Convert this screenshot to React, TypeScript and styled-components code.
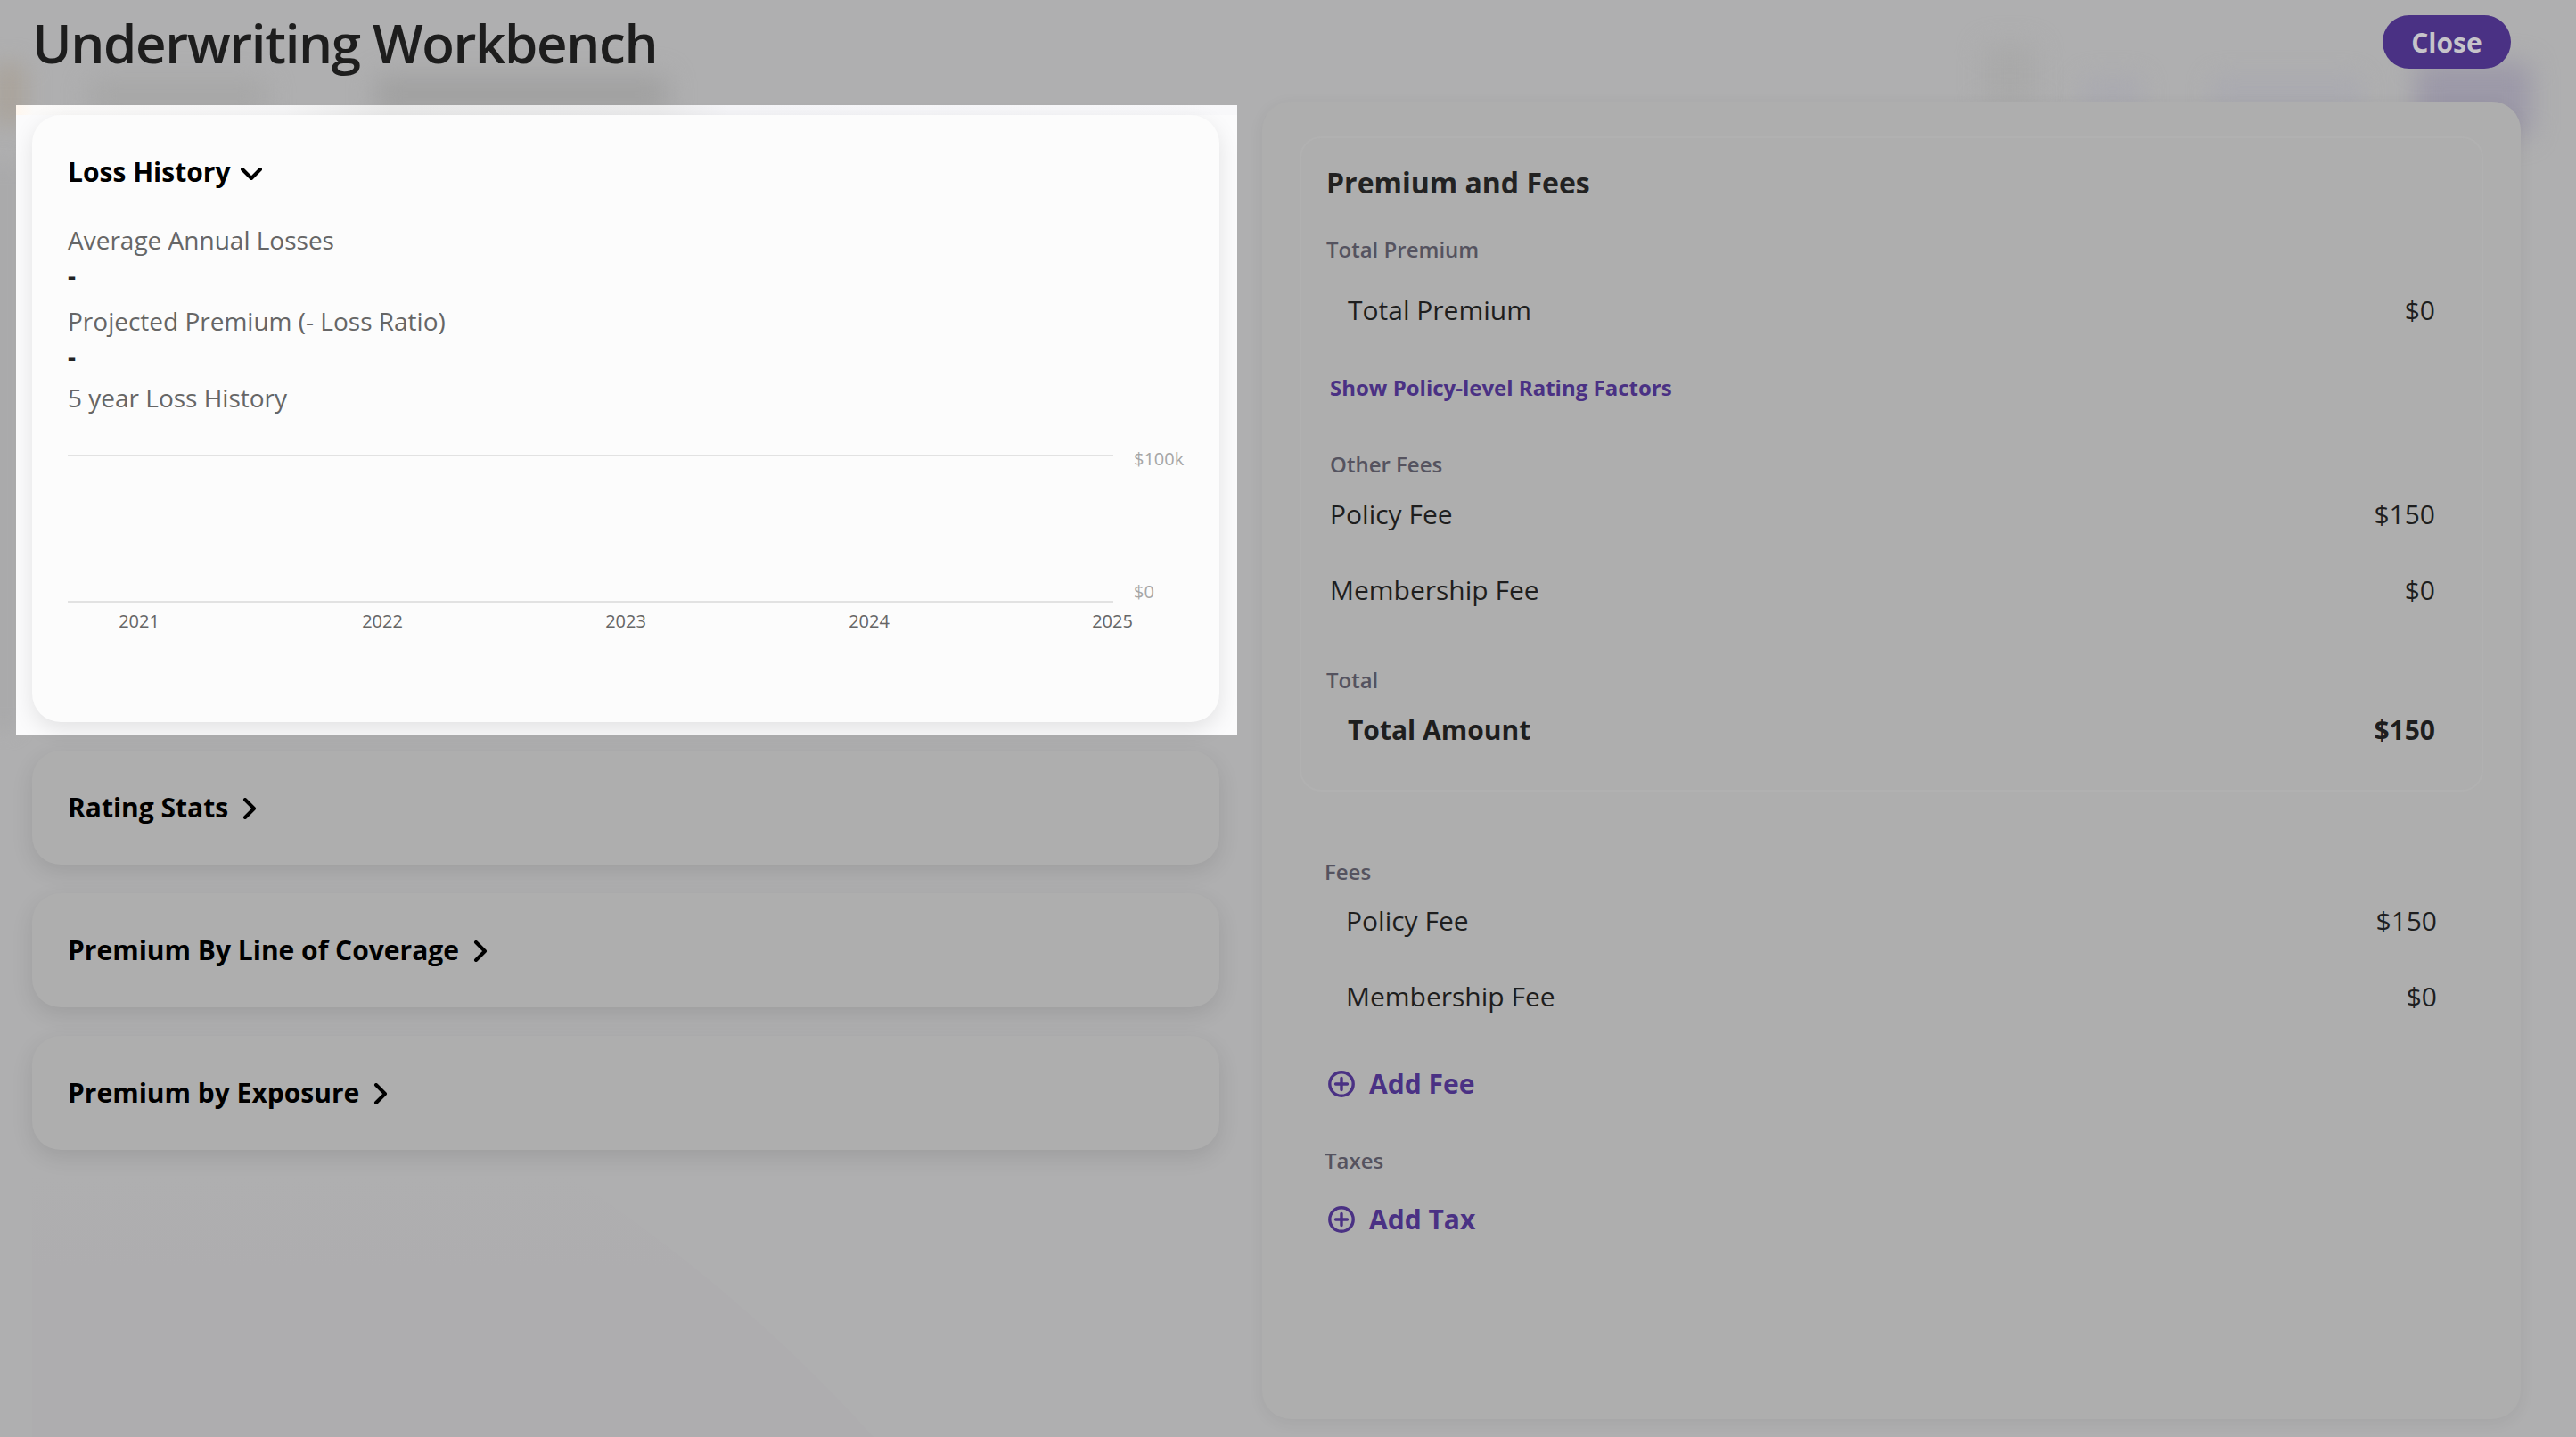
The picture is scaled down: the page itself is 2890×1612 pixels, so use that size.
import React from "react";
import styled, { createGlobalStyle } from "styled-components";

const GlobalStyle = createGlobalStyle`
  html, body { margin: 0; padding: 0; background: #afafb0; }
  * { box-sizing: border-box; }
`;

const PURPLE = "#4a3184";

const Page = styled.div`
  position: relative;
  width: 2890px;
  height: 1612px;
  overflow: hidden;
  background: #afafb0;
  font-family: "Open Sans", "Noto Sans", sans-serif;
  color: #1e1e1e;
`;

const Backdrop = styled.div`
  position: absolute;
  inset: 0;
`;

const Blob = styled.div<{ $x: number; $y: number; $w: number; $h: number; $c: string; $b?: number }>`
  position: absolute;
  left: ${(p) => p.$x}px;
  top: ${(p) => p.$y}px;
  width: ${(p) => p.$w}px;
  height: ${(p) => p.$h}px;
  background: ${(p) => p.$c};
  border-radius: 12px;
  filter: blur(${(p) => p.$b ?? 14}px);
`;

const BackdropShape = styled.svg`
  position: absolute;
  left: 0;
  top: 0;
`;

const Foreground = styled.div`
  position: relative;
  display: flex;
  flex-direction: column;
  height: 100%;
`;

const Header = styled.header`
  display: flex;
  justify-content: space-between;
  align-items: flex-start;
  height: 114px;
  padding: 8px 73px 0 36px;
`;

const Title = styled.h1`
  margin: 0;
  font-size: 60px;
  line-height: 80px;
  font-weight: 600;
  letter-spacing: -1.35px;
  color: #1d1d1d;
`;

const CloseButton = styled.button`
  width: 144px;
  height: 60px;
  margin-top: 9px;
  border: none;
  border-radius: 30px;
  background: ${PURPLE};
  color: #c6c4ca;
  font-family: inherit;
  font-size: 30px;
  font-weight: 700;
  padding: 0;
`;

const Body = styled.main`
  display: flex;
  align-items: flex-start;
  height: 1478px;
  padding-left: 18px;
`;

const LeftColumn = styled.section`
  display: flex;
  flex-direction: column;
  width: 1370px;
  padding-top: 4px;
  margin-right: 28px;
`;

const Spotlight = styled.div`
  padding: 11px 20px 14px 18px;
  background:
    linear-gradient(90deg, #fff7ee 0, #fbfaf9 20px, #f6f6f7 300px, #eaeaea 420px, #ececed 720px, #f5f5f8 800px, #f8f8fa 100%) top / 100% 11px no-repeat,
    #fbfbfc;
`;

const Card = styled.article`
  border-radius: 32px;
  background: #fcfcfc;
  box-shadow: 0 8px 24px rgba(0, 0, 0, 0.1);
  padding: 44px 38px 84px 40px;
`;

const CollapsedList = styled.div`
  display: flex;
  flex-direction: column;
  gap: 32px;
  margin: 18px 20px 0 18px;
`;

const CollapsedCard = styled.article`
  height: 128px;
  border-radius: 32px;
  background: #aeaeae;
  box-shadow: 0 8px 24px rgba(0, 0, 0, 0.1);
  padding: 44px 38px 0 40px;
`;

const CardTitle = styled.div`
  display: flex;
  align-items: center;
  gap: 12px;
  font-size: 30px;
  line-height: 40px;
  font-weight: 700;
  color: #000;
`;

const ChevronDownIcon = styled.svg`
  margin-top: 3px;
`;

const ChevronRightIcon = styled.svg`
  margin: 1px 0 0 4px;
`;

const StatLabel = styled.div<{ $top: number }>`
  margin-top: ${(p) => p.$top}px;
  font-size: 28px;
  line-height: 40px;
  color: #666;
`;

const StatValue = styled.div`
  font-size: 28px;
  line-height: 40px;
  font-weight: 700;
  color: #222;
`;

const Chart = styled.svg`
  display: block;
  margin-top: 30px;
  font-family: "Open Sans", sans-serif;
`;

const RightPanel = styled.section`
  width: 1412px;
  height: 1478px;
  border-radius: 32px;
  background: #aeaeae;
  box-shadow: 0 4px 18px rgba(0, 0, 0, 0.06);
  padding: 39px 42px 0 42px;
`;

const InnerCard = styled.div`
  height: 735px;
  border: 2px solid #b1b1b1;
  border-radius: 24px;
  padding: 28px 52px 0 28px;
`;

const PanelTitle = styled.h2`
  margin: 0;
  font-size: 32px;
  line-height: 44px;
  font-weight: 700;
  color: #222;
`;

const SectionLabel = styled.div<{ $top: number; $indent?: number }>`
  margin-top: ${(p) => p.$top}px;
  margin-left: ${(p) => p.$indent ?? 0}px;
  font-size: 24px;
  line-height: 32px;
  font-weight: 600;
  color: #55535f;
`;

const Row = styled.div<{ $top: number; $indent: number; $strong?: boolean }>`
  display: flex;
  justify-content: space-between;
  margin-top: ${(p) => p.$top}px;
  margin-left: ${(p) => p.$indent}px;
  font-size: 30px;
  line-height: 40px;
  font-weight: ${(p) => (p.$strong ? 700 : 400)};
  color: #1e1e1e;
`;

const LinkText = styled.div`
  margin: 51px 0 0 4px;
  font-size: 24px;
  line-height: 32px;
  font-weight: 700;
  color: ${PURPLE};
`;

const Outside = styled.div`
  padding: 0 52px 0 28px;
`;

const AddAction = styled.div<{ $top: number }>`
  display: flex;
  align-items: center;
  gap: 16px;
  margin: ${(p) => p.$top}px 0 0 4px;
  font-size: 30px;
  line-height: 44px;
  font-weight: 700;
  color: ${PURPLE};
`;

const ChevronDown = () => (
  <ChevronDownIcon width="24" height="16" viewBox="0 0 24 16" fill="none">
    <path d="M2 3l10 10L22 3" stroke="#000" strokeWidth="4" strokeLinecap="round" strokeLinejoin="round" />
  </ChevronDownIcon>
);

const ChevronRight = () => (
  <ChevronRightIcon width="16" height="24" viewBox="0 0 16 24" fill="none">
    <path d="M3 2l10 10L3 22" stroke="#000" strokeWidth="4" strokeLinecap="round" strokeLinejoin="round" />
  </ChevronRightIcon>
);

const PlusCircle = () => (
  <svg width="30" height="30" viewBox="0 0 30 30" fill="none">
    <circle cx="15" cy="15" r="13.2" stroke={PURPLE} strokeWidth="3.4" />
    <path d="M15 8.5v13M8.5 15h13" stroke={PURPLE} strokeWidth="3.4" strokeLinecap="round" />
  </svg>
);

const years = [
  { label: "2021", x: 80 },
  { label: "2022", x: 353 },
  { label: "2023", x: 626 },
  { label: "2024", x: 899 },
  { label: "2025", x: 1172 },
];

const blobs = [
  { x: -10, y: 70, w: 40, h: 70, c: "#aaa49c", b: 12 },
  { x: -10, y: 180, w: 28, h: 640, c: "#a9a9aa", b: 10 },
  { x: 100, y: 88, w: 200, h: 40, c: "#a7a7a7", b: 14 },
  { x: 420, y: 84, w: 330, h: 44, c: "#a1a1a1", b: 14 },
  { x: 2225, y: 50, w: 60, h: 70, c: "#a9a9a9", b: 14 },
  { x: 2335, y: 85, w: 70, h: 40, c: "#aaaab0", b: 12 },
  { x: 2480, y: 85, w: 170, h: 40, c: "#aaaab0", b: 12 },
  { x: 2710, y: 70, w: 130, h: 84, c: "#9c99a8", b: 14 },
];

export default function App() {
  return (
    <>
      <GlobalStyle />
      <Page>
        <Backdrop>
          <BackdropShape width="2890" height="1612" viewBox="0 0 2890 1612">
            <defs>
              <linearGradient id="lowerShade" x1="0" y1="0" x2="0" y2="1">
                <stop offset="0" stopColor="#aeadaf" stopOpacity="0" />
                <stop offset="0.35" stopColor="#aeadaf" />
              </linearGradient>
            </defs>
            <path d="M36 1320H640C760 1400 880 1500 980 1612H36z" fill="url(#lowerShade)" />
          </BackdropShape>
          {blobs.map((b, i) => (
            <Blob key={i} $x={b.x} $y={b.y} $w={b.w} $h={b.h} $c={b.c} $b={b.b} />
          ))}
        </Backdrop>
        <Foreground>
          <Header>
            <Title>Underwriting Workbench</Title>
            <CloseButton>Close</CloseButton>
          </Header>
          <Body>
            <LeftColumn>
              <Spotlight>
                <Card>
                  <CardTitle>
                    Loss History
                    <ChevronDown />
                  </CardTitle>
                  <StatLabel $top={36}>Average Annual Losses</StatLabel>
                  <StatValue>-</StatValue>
                  <StatLabel $top={11}>Projected Premium (- Loss Ratio)</StatLabel>
                  <StatValue>-</StatValue>
                  <StatLabel $top={6}>5 year Loss History</StatLabel>
                  <Chart width="1294" height="230" viewBox="0 0 1294 230">
                    <line x1="0" x2="1173" y1="15" y2="15" stroke="#e2e2e2" strokeWidth="2" />
                    <line x1="0" x2="1173" y1="179" y2="179" stroke="#e2e2e2" strokeWidth="2" />
                    <text x="1196" y="26" fontSize="20" fill="#a6a6a6">$100k</text>
                    <text x="1196" y="175" fontSize="20" fill="#a6a6a6">$0</text>
                    {years.map((y) => (
                      <text key={y.label} x={y.x} y="208" fontSize="20" fill="#666" textAnchor="middle">
                        {y.label}
                      </text>
                    ))}
                  </Chart>
                </Card>
              </Spotlight>
              <CollapsedList>
                {["Rating Stats", "Premium By Line of Coverage", "Premium by Exposure"].map((t) => (
                  <CollapsedCard key={t}>
                    <CardTitle>
                      {t}
                      <ChevronRight />
                    </CardTitle>
                  </CollapsedCard>
                ))}
              </CollapsedList>
            </LeftColumn>
            <RightPanel>
              <InnerCard>
                <PanelTitle>Premium and Fees</PanelTitle>
                <SectionLabel $top={37}>Total Premium</SectionLabel>
                <Row $top={32} $indent={24}>
                  <span>Total Premium</span>
                  <span>$0</span>
                </Row>
                <LinkText>Show Policy-level Rating Factors</LinkText>
                <SectionLabel $top={54} $indent={4}>Other Fees</SectionLabel>
                <Row $top={20} $indent={4}>
                  <span>Policy Fee</span>
                  <span>$150</span>
                </Row>
                <Row $top={45} $indent={4}>
                  <span>Membership Fee</span>
                  <span>$0</span>
                </Row>
                <SectionLabel $top={65}>Total</SectionLabel>
                <Row $top={20} $indent={24} $strong>
                  <span>Total Amount</span>
                  <span>$150</span>
                </Row>
              </InnerCard>
              <Outside>
                <SectionLabel $top={74}>Fees</SectionLabel>
                <Row $top={19} $indent={24}>
                  <span>Policy Fee</span>
                  <span>$150</span>
                </Row>
                <Row $top={45} $indent={24}>
                  <span>Membership Fee</span>
                  <span>$0</span>
                </Row>
                <AddAction $top={56}>
                  <PlusCircle />
                  Add Fee
                </AddAction>
                <SectionLabel $top={48}>Taxes</SectionLabel>
                <AddAction $top={28}>
                  <PlusCircle />
                  Add Tax
                </AddAction>
              </Outside>
            </RightPanel>
          </Body>
        </Foreground>
      </Page>
    </>
  );
}
